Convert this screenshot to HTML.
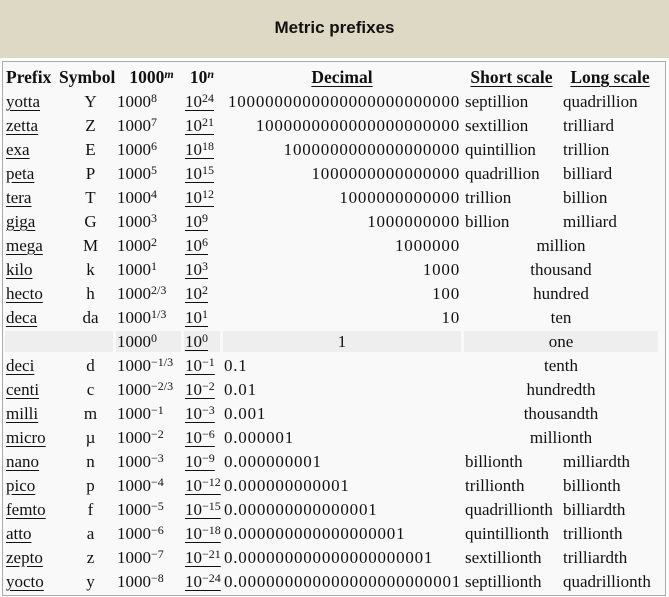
<!DOCTYPE html>
<html><head><meta charset="utf-8"><style>
html,body{margin:0;padding:0;width:669px;height:597px;overflow:hidden;background:#fff}
.top{position:absolute;left:0;top:0;width:669px;height:58px;background:#ddd9c4;font:bold 17px "Liberation Sans",sans-serif;color:#111;text-align:center;line-height:56px}
.box{position:absolute;left:2px;top:61px;width:662px;height:533px;border:1px solid #aaa;background:#f9f9f9}
table{position:absolute;left:-1px;top:2px;width:659px;border-spacing:3px;table-layout:fixed;font:17px "Liberation Serif",serif;color:#111}
td,th{box-sizing:border-box;height:21px;padding:0 1px;line-height:21px;white-space:nowrap;overflow:visible}
th{font-weight:bold;text-align:left;font-size:17.5px}
.c{text-align:center}.r{text-align:right}
.u{text-decoration:underline;text-underline-offset:3px}
sup{font-size:12px;vertical-align:5px;line-height:0}
.d{letter-spacing:0.78px}
.g td{background:#eee}
</style></head><body>
<div class="top">Metric prefixes</div>
<div class="box"><table>
<colgroup><col style="width:60px"><col style="width:45px"><col style="width:65px"><col style="width:36px"><col style="width:238px"><col style="width:95px"><col style="width:96px"></colgroup>
<tr><th>Prefix</th><th style="padding-left:0"><span style="position:relative;left:-9px">Symbol</span></th><th class="c"><span style="position:relative;left:3px">1000<sup><i>m</i></sup></span></th><th class="c">10<sup><i>n</i></sup></th><th class="c"><span class="u">Decimal</span></th><th class="c"><span class="u">Short scale</span></th><th class="c"><span class="u">Long scale</span></th></tr>
<tr><td class="u">yotta</td><td class="c">Y</td><td>1000<sup>8</sup></td><td><span class="u">10<sup>24</sup></span></td><td class="r d">1000000000000000000000000</td><td>septillion</td><td>quadrillion</td></tr>
<tr><td class="u">zetta</td><td class="c">Z</td><td>1000<sup>7</sup></td><td><span class="u">10<sup>21</sup></span></td><td class="r d">1000000000000000000000</td><td>sextillion</td><td>trilliard</td></tr>
<tr><td class="u">exa</td><td class="c">E</td><td>1000<sup>6</sup></td><td><span class="u">10<sup>18</sup></span></td><td class="r d">1000000000000000000</td><td>quintillion</td><td>trillion</td></tr>
<tr><td class="u">peta</td><td class="c">P</td><td>1000<sup>5</sup></td><td><span class="u">10<sup>15</sup></span></td><td class="r d">1000000000000000</td><td>quadrillion</td><td>billiard</td></tr>
<tr><td class="u">tera</td><td class="c">T</td><td>1000<sup>4</sup></td><td><span class="u">10<sup>12</sup></span></td><td class="r d">1000000000000</td><td>trillion</td><td>billion</td></tr>
<tr><td class="u">giga</td><td class="c">G</td><td>1000<sup>3</sup></td><td><span class="u">10<sup>9</sup></span></td><td class="r d">1000000000</td><td>billion</td><td>milliard</td></tr>
<tr><td class="u">mega</td><td class="c">M</td><td>1000<sup>2</sup></td><td><span class="u">10<sup>6</sup></span></td><td class="r d">1000000</td><td colspan="2" class="c">million</td></tr>
<tr><td class="u">kilo</td><td class="c">k</td><td>1000<sup>1</sup></td><td><span class="u">10<sup>3</sup></span></td><td class="r d">1000</td><td colspan="2" class="c">thousand</td></tr>
<tr><td class="u">hecto</td><td class="c">h</td><td>1000<sup>2/3</sup></td><td><span class="u">10<sup>2</sup></span></td><td class="r d">100</td><td colspan="2" class="c">hundred</td></tr>
<tr><td class="u">deca</td><td class="c">da</td><td>1000<sup>1/3</sup></td><td><span class="u">10<sup>1</sup></span></td><td class="r d">10</td><td colspan="2" class="c">ten</td></tr>
<tr class="g"><td colspan="2"></td><td>1000<sup>0</sup></td><td><span class="u">10<sup>0</sup></span></td><td class="c">1</td><td colspan="2" class="c">one</td></tr>
<tr><td class="u">deci</td><td class="c">d</td><td>1000<sup>−1/3</sup></td><td><span class="u">10<sup>−1</sup></span></td><td class="d">0.1</td><td colspan="2" class="c">tenth</td></tr>
<tr><td class="u">centi</td><td class="c">c</td><td>1000<sup>−2/3</sup></td><td><span class="u">10<sup>−2</sup></span></td><td class="d">0.01</td><td colspan="2" class="c">hundredth</td></tr>
<tr><td class="u">milli</td><td class="c">m</td><td>1000<sup>−1</sup></td><td><span class="u">10<sup>−3</sup></span></td><td class="d">0.001</td><td colspan="2" class="c">thousandth</td></tr>
<tr><td class="u">micro</td><td class="c">µ</td><td>1000<sup>−2</sup></td><td><span class="u">10<sup>−6</sup></span></td><td class="d">0.000001</td><td colspan="2" class="c">millionth</td></tr>
<tr><td class="u">nano</td><td class="c">n</td><td>1000<sup>−3</sup></td><td><span class="u">10<sup>−9</sup></span></td><td class="d">0.000000001</td><td>billionth</td><td>milliardth</td></tr>
<tr><td class="u">pico</td><td class="c">p</td><td>1000<sup>−4</sup></td><td><span class="u">10<sup>−12</sup></span></td><td class="d">0.000000000001</td><td>trillionth</td><td>billionth</td></tr>
<tr><td class="u">femto</td><td class="c">f</td><td>1000<sup>−5</sup></td><td><span class="u">10<sup>−15</sup></span></td><td class="d">0.000000000000001</td><td>quadrillionth</td><td>billiardth</td></tr>
<tr><td class="u">atto</td><td class="c">a</td><td>1000<sup>−6</sup></td><td><span class="u">10<sup>−18</sup></span></td><td class="d">0.000000000000000001</td><td>quintillionth</td><td>trillionth</td></tr>
<tr><td class="u">zepto</td><td class="c">z</td><td>1000<sup>−7</sup></td><td><span class="u">10<sup>−21</sup></span></td><td class="d">0.000000000000000000001</td><td>sextillionth</td><td>trilliardth</td></tr>
<tr><td class="u">yocto</td><td class="c">y</td><td>1000<sup>−8</sup></td><td><span class="u">10<sup>−24</sup></span></td><td class="d">0.000000000000000000000001</td><td>septillionth</td><td>quadrillionth</td></tr>
</table></div>
</body></html>
